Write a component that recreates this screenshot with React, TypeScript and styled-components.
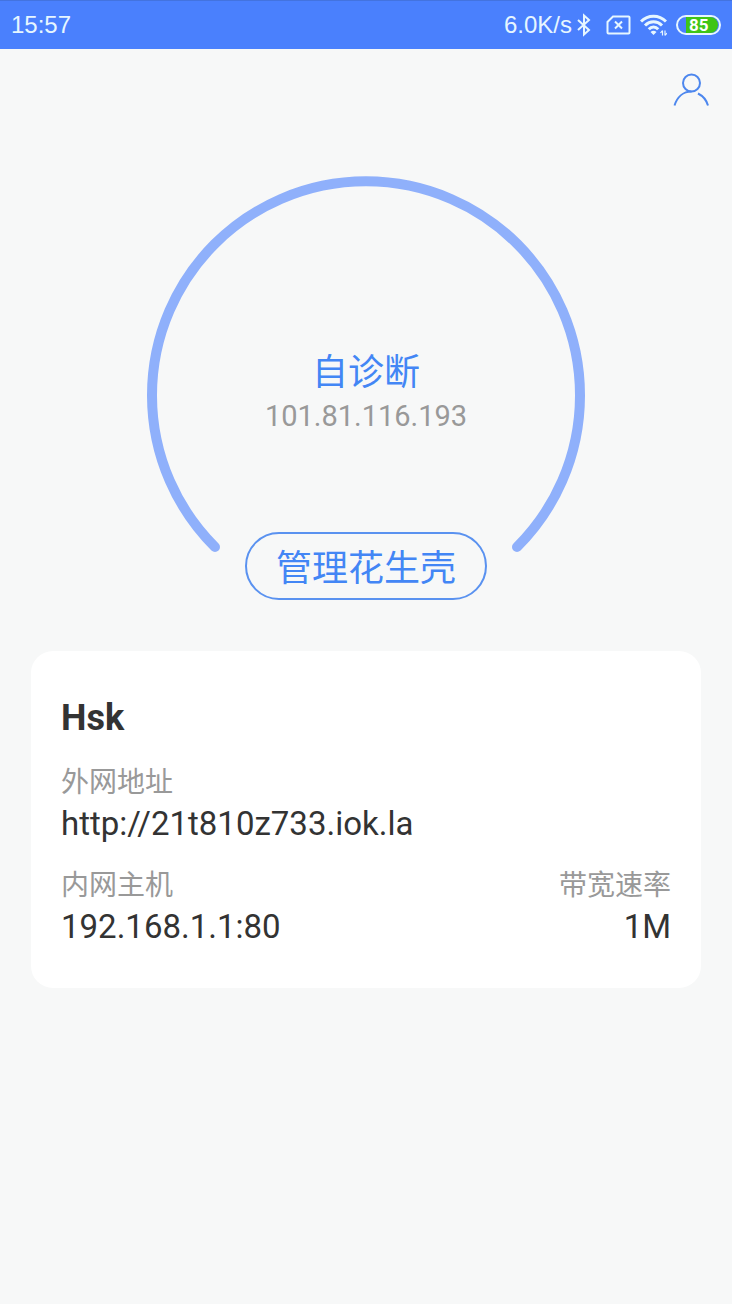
import React from "react";
import styled, { createGlobalStyle } from "styled-components";

const GlobalStyle = createGlobalStyle`
  *, *::before, *::after { box-sizing: border-box; }
  body {
    margin: 0;
    background: #f7f8f8;
    color: #333;
    font-family: Roboto, "Noto Sans CJK SC", sans-serif;
  }
  button { font-family: inherit; cursor: pointer; }
`;

const Page = styled.div`
  display: flex;
  flex-direction: column;
  min-height: 100vh;
`;

const StatusBar = styled.header`
  display: flex;
  align-items: center;
  justify-content: space-between;
  height: 49px;
  padding: 0 11px;
  border-top: 1px solid #4373df;
  background: #4a80fd;
  color: #e6f6ff;
`;

const StatusText = styled.span`
  font-family: "Liberation Sans", sans-serif;
  font-size: 24px;
  line-height: 32px;
`;

const StatusGroup = styled.div<{ $gap: number }>`
  display: flex;
  align-items: center;
  gap: ${({ $gap }) => $gap}px;
`;

const Icon = styled.svg`
  display: block;
  flex: none;
  fill: none;
  stroke: currentColor;
  stroke-width: 2;
`;

const Battery = styled.span`
  display: flex;
  width: 45px;
  height: 20px;
  padding: 0 1px 0 8px;
  border: 2px solid #e6f6ff;
  border-radius: 10px;
`;

const BatteryLevel = styled.span`
  flex: 1;
  padding-left: 3px;
  border-radius: 0 8px 8px 0;
  background: #3fc516;
  color: #fff;
  font-size: 17px;
  font-weight: 700;
  line-height: 16px;
`;

const Toolbar = styled.nav`
  display: flex;
  justify-content: flex-end;
  padding: 16px 15px 0;
`;

const IconButton = styled.button`
  padding: 8px;
  border: 0;
  background: none;
  color: #4d87ee;
`;

const DialSection = styled.section`
  display: flex;
  justify-content: center;
  padding: 61px 31px 51px;
`;

const Dial = styled.div`
  display: grid;
  width: 100%;
  max-width: 438px;

  & > * { grid-area: 1 / 1; }
`;

const Ring = styled.svg`
  display: block;
  width: 100%;
  fill: none;
  stroke: #8fb0fb;
  stroke-width: 10;
  stroke-linecap: round;
`;

const DialContent = styled.div`
  display: flex;
  flex-direction: column;
  align-items: center;
  padding-top: 172px;
`;

const DiagnoseButton = styled.button`
  padding: 0;
  border: 0;
  background: none;
  color: #4386f5;
  font-size: 36px;
  line-height: 50px;
`;

const Address = styled.p`
  margin: 0;
  color: #999;
  font-size: 29px;
  line-height: 36px;
`;

const ManageButton = styled.button`
  margin-top: auto;
  height: 68px;
  padding: 5px 29px 0;
  border: 2px solid #5a92f0;
  border-radius: 34px;
  background: none;
  color: #4386f5;
  font-size: 36px;
  line-height: 52px;
`;

const Card = styled.section`
  margin: 0 31px;
  padding: 46px 30px 42px;
  border-radius: 22px;
  background: #fff;
`;

const CardTitle = styled.h1`
  margin: 0 0 22px;
  font-size: 36px;
  font-weight: 700;
  line-height: 42px;
`;

const Details = styled.dl`
  display: flex;
  flex-wrap: wrap;
  justify-content: space-between;
  row-gap: 21px;
  margin: 0;
`;

const Detail = styled.div<{ $wide?: boolean; $end?: boolean }>`
  flex-basis: ${({ $wide }) => ($wide ? "100%" : "auto")};
  text-align: ${({ $end }) => ($end ? "right" : "left")};
`;

const Label = styled.dt`
  color: #999;
  font-size: 28px;
  line-height: 44px;
`;

const Value = styled.dd`
  margin: 0;
  font-size: 33px;
  line-height: 38px;
`;

const Link = styled.a`
  color: inherit;
  text-decoration: none;
`;

export default function App() {
  return (
    <Page>
      <GlobalStyle />
      <StatusBar>
        <StatusText>15:57</StatusText>
        <StatusGroup $gap={9}>
          <StatusGroup $gap={5}>
            <StatusText>6.0K/s</StatusText>
            <Icon width="20" height="24" viewBox="0 0 20 24" aria-label="蓝牙">
              <path d="M1 7 12 17 7 21.500V2.500L12 7 1 17" />
            </Icon>
          </StatusGroup>
          <Icon width="25" height="20" viewBox="0 0 25 20" aria-label="无 SIM 卡">
            <path d="M7 1.500H22.500Q23.500 1.500 23.500 2.500V17.500Q23.500 18.500 22.500 18.500H2.500Q1.500 18.500 1.500 17.500V7Z" />
            <path d="M9 6.500 16 13.500M16 6.500 9 13.500" />
          </Icon>
          <Icon width="27" height="22" viewBox="0 0 27 22" aria-label="无线网络">
            <path d="M1 7.500C8 .4 19 .4 26 7.500" strokeWidth="3" />
            <path d="M5 11.500C10 6.500 17 6.500 22 11.500" strokeWidth="3" />
            <path d="M8.800 15.300C11.500 12.300 15.500 12.300 18.200 15.300" strokeWidth="3" />
            <path d="M10.500 18Q13.500 15.500 16.500 18L13.500 21Z" fill="currentColor" stroke="none" />
            <path d="M22.500 16.500V21.500M22.500 16.500 20.500 19M25 16.500V21.500M25 21.500 27 19" strokeWidth="1.200" />
          </Icon>
          <Battery>
            <BatteryLevel>85</BatteryLevel>
          </Battery>
        </StatusGroup>
      </StatusBar>

      <Toolbar>
        <IconButton type="button" aria-label="个人中心">
          <Icon width="36" height="34" viewBox="0 0 36 34">
            <circle cx="18.500" cy="10" r="8.500" />
            <path d="M1.500 32.500C4 24.500 10 18.500 18.500 18.500" />
            <path d="M25 20.500C30 23 33.500 27 35 32.500" />
          </Icon>
        </IconButton>
      </Toolbar>

      <DialSection>
        <Dial>
          <Ring viewBox="0 0 438 424" aria-hidden="true">
            <path d="M68 371A214 214 0 1 1 370 371" />
          </Ring>
          <DialContent>
            <DiagnoseButton type="button">自诊断</DiagnoseButton>
            <Address>101.81.116.193</Address>
            <ManageButton type="button">管理花生壳</ManageButton>
          </DialContent>
        </Dial>
      </DialSection>

      <Card>
        <CardTitle>Hsk</CardTitle>
        <Details>
          <Detail $wide>
            <Label>外网地址</Label>
            <Value>
              <Link href="http://21t810z733.iok.la">http://21t810z733.iok.la</Link>
            </Value>
          </Detail>
          <Detail>
            <Label>内网主机</Label>
            <Value>192.168.1.1:80</Value>
          </Detail>
          <Detail $end>
            <Label>带宽速率</Label>
            <Value>1M</Value>
          </Detail>
        </Details>
      </Card>
    </Page>
  );
}
